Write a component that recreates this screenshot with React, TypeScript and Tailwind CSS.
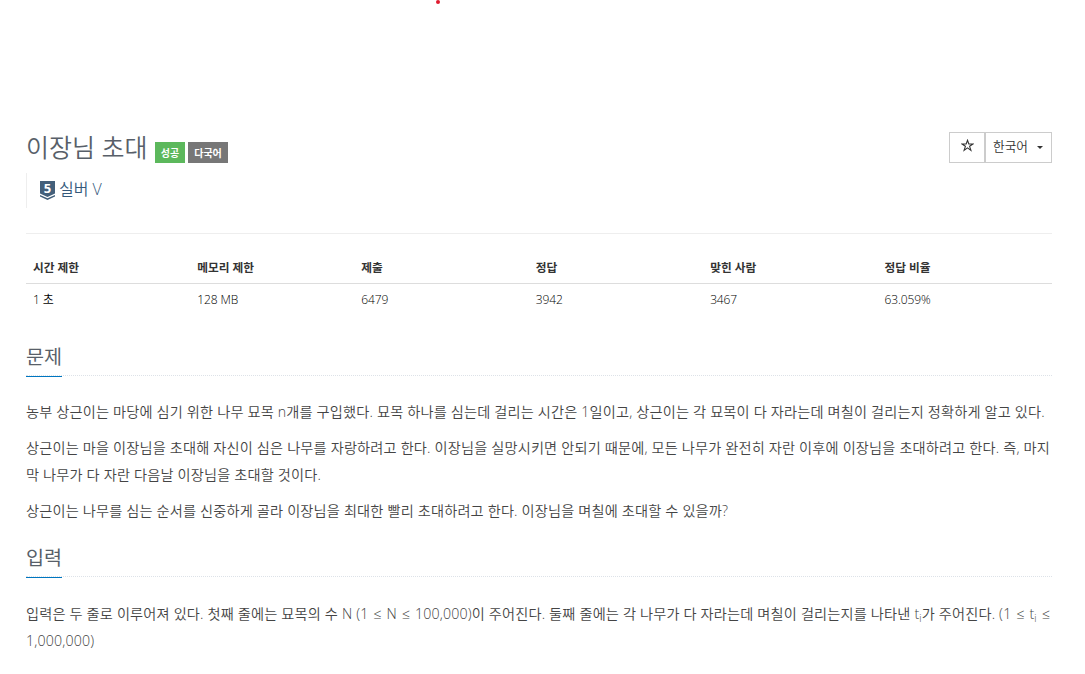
const columns = [
    { title: "시간 제한", value: "1 초", width: "w-[16%]" },
    { title: "메모리 제한", value: "128 MB", width: "w-[16%]" },
    { title: "제출", value: "6479", width: "w-[17%]" },
    { title: "정답", value: "3942", width: "w-[17%]" },
    { title: "맞힌 사람", value: "3467", width: "w-[17%]" },
    { title: "정답 비율", value: "63.059%", width: "w-[17%]" },
]

function Headline({ title }: { title: string }) {
    return (
        <div className="h-[33px] border-b border-dotted border-[#dde2e8]">
            <h2 className="inline-block h-[34px] border-b border-solid border-[#0076c0] text-[19.6px] leading-[28px] text-[#585f69]">{title}</h2>
        </div>
    )
}

function Leq() {
    return <span className="mx-px">≤</span>
}

export default function App() {
    return (
        <div className="h-[674px] overflow-hidden bg-white pl-[26px] pr-[33px] font-['Open_Sans','Noto_Sans_CJK_KR',sans-serif] text-[13px] text-[#333]">
            <div className="flex h-[132px] pl-[410px]">
                <div className="h-1 w-1 rounded-full bg-[#e01b2f]" />
            </div>

            <div className="flex h-[31px] justify-between">
                <div className="flex">
                    <h1 className="w-[129px] whitespace-nowrap text-[25px] leading-[31px] text-[#585f69] font-[350]">이장님 초대</h1>
                    <span className="mt-[10px] h-[21px] w-[30px] whitespace-nowrap bg-[#5cb85c] text-center text-[10px] font-bold leading-[22px] text-white">성공</span>
                    <span className="ml-[3px] mt-[10px] h-[21px] w-[40px] whitespace-nowrap bg-[#777] text-center text-[10px] font-bold leading-[22px] text-white">다국어</span>
                </div>
                <div className="flex">
                    <button className="flex w-[36px] items-center justify-center border border-[#ccc] pb-1">
                        <svg width="13" height="13" viewBox="0 0 13 13" fill="none" stroke="#333" strokeWidth="1.1">
                            <path d="M6.5 1.3L7.8 5h4.1L8.6 7.3l1.3 4.1-3.4-2.5-3.4 2.5 1.3-4.1L1.1 5h4.1z" />
                        </svg>
                    </button>
                    <button className="flex w-[67px] items-center border border-[#ccc] pl-[7px] text-[12.7px] font-[350]">
                        <span className="-mt-px w-[44px] text-left">한국어</span>
                        <span className="border-x-[3px] border-t-[3px] border-x-transparent border-t-[#333]" />
                    </button>
                </div>
            </div>

            {/* tier */}
            <div className="mt-[10px] flex h-[35px] items-center border-l border-[#eee] pl-[13px] text-[16px] font-[350] text-[#35597b]">
                <svg width="15" height="19" viewBox="0 0 15 19" className="mr-1 overflow-visible">
                    <path d="M0 0h15v12.5l-7.5 3.5L0 12.5z" fill="#435f7a" />
                    <path d="M0 14l7.5 3.2L15 14v1.5L7.5 19 0 15.5z" fill="#435f7a" />
                    <text x="7.5" y="12" textAnchor="middle" fontSize="13" fontWeight="700" fill="#fff">5</text>
                </svg>
                <span className="-mt-[3px]">실버 V</span>
            </div>

            <hr className="mt-[25px] border-[#eee]" />

            <table className="mt-[17px] w-full table-fixed text-left text-[12px]">
                <thead>
                    <tr className="h-[32px] border-b border-[#ddd]">
                        {columns.map((c) => (
                            <th key={c.title} className={`${c.width} pl-[7px] pt-[2px] text-[11.7px] font-bold`}>{c.title}</th>
                        ))}
                    </tr>
                </thead>
                <tbody>
                    <tr className="h-[32px]">
                        {columns.map((c) => (
                            <td key={c.title} className="pl-[7px] pt-[2px] font-[350] tracking-[-0.1px] text-black">{c.value}</td>
                        ))}
                    </tr>
                </tbody>
            </table>

            <section className="mt-[28px]">
                <Headline title="문제" />
                <div className="pt-[22px] text-[14.2px] leading-[27px] tracking-[0.17px] text-[#444] font-[350]">
                    <p className="mb-[9px]">농부 상근이는 마당에 심기 위한 나무 묘목 n개를 구입했다. 묘목 하나를 심는데 걸리는 시간은 1일이고, 상근이는 각 묘목이 다 자라는데 며칠이 걸리는지 정확하게 알고 있다.</p>
                    <p className="mb-[9px]">상근이는 마을 이장님을 초대해 자신이 심은 나무를 자랑하려고 한다. 이장님을 실망시키면 안되기 때문에, 모든 나무가 완전히 자란 이후에 이장님을 초대하려고 한다. 즉, 마지막 나무가 다 자란 다음날 이장님을 초대할 것이다.</p>
                    <p>상근이는 나무를 심는 순서를 신중하게 골라 이장님을 최대한 빨리 초대하려고 한다. 이장님을 며칠에 초대할 수 있을까?</p>
                </div>
            </section>

            <section className="mt-[20px]">
                <Headline title="입력" />
                <p className="pt-[23px] text-[14.2px] leading-[27px] tracking-[0.17px] text-[#444] font-[350]">
                    입력은 두 줄로 이루어져 있다. 첫째 줄에는 묘목의 수 N (1 <Leq /> N <Leq /> 100,000)이 주어진다. 둘째 줄에는 각 나무가 다 자라는데 며칠이 걸리는지를 나타낸 t<sub className="text-[10px]">i</sub>가 주어진다. (1 <Leq /> t<sub className="text-[10px]">i</sub> <Leq /> 1,000,000)
                </p>
            </section>
        </div>
    )
}
